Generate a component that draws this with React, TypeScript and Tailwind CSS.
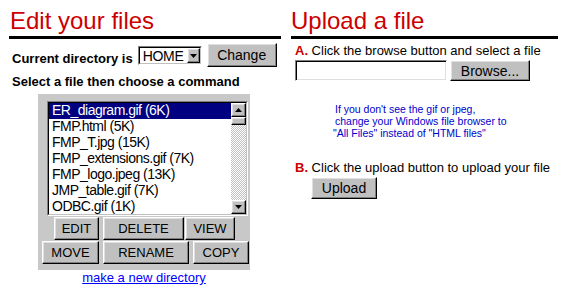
import React from "react";

const files = [
  "ER_diagram.gif (6K)",
  "FMP.html (5K)",
  "FMP_T.jpg (15K)",
  "FMP_extensions.gif (7K)",
  "FMP_logo.jpeg (13K)",
  "JMP_table.gif (7K)",
  "ODBC.gif (1K)",
];

const raised =
  "bg-[#c0c0c0] border border-t-white border-l-white border-r-black border-b-black shadow-[inset_-1px_-1px_#808080,inset_1px_1px_#dfdfdf]";

function Btn({ label, className }: { label: string; className: string }) {
  return (
    <button
      className={`${raised} ${className} flex items-center justify-center text-[13px] leading-none text-black`}
    >
      {label}
    </button>
  );
}

function Arrow({ up }: { up?: boolean }) {
  return (
    <svg width="7" height="4" viewBox="0 0 7 4">
      {up ? (
        <polygon points="3.5,0 7,4 0,4" fill="#000" />
      ) : (
        <polygon points="0,0 7,0 3.5,4" fill="#000" />
      )}
    </svg>
  );
}

function FileList() {
  return (
    <div className="ml-[9px] mt-[7px] w-[201px] h-[115px] border border-t-[#808080] border-l-[#808080] border-r-white border-b-white">
      <div className="h-full border border-t-black border-l-black border-r-[#c0c0c0] border-b-[#c0c0c0] bg-white flex overflow-hidden">
        <div className="flex-1 overflow-hidden">
          {files.map((f, i) => (
            <div
              key={f}
              className={`h-[16px] leading-[15px] pl-[3px] text-[14px] tracking-[-0.5px] whitespace-nowrap ${
                i === 0 ? "bg-[#000080] text-white" : "text-black"
              }`}
            >
              {f}
            </div>
          ))}
        </div>
        <div className="w-[15px] flex flex-col bg-[image:repeating-conic-gradient(#c0c0c0_0%_25%,#ffffff_0%_50%)] bg-[length:2px_2px]">
          <div className={`${raised} h-[14px] flex items-center justify-center`}>
            <Arrow up />
          </div>
          <div className={`${raised} h-[8px]`} />
          <div className="flex-1" />
          <div className={`${raised} h-[14px] flex items-center justify-center`}>
            <Arrow />
          </div>
        </div>
      </div>
    </div>
  );
}

export default function App() {
  return (
    <div className="w-[565px] h-[298px] bg-white flex font-['Liberation_Sans',Arial,sans-serif] text-black overflow-hidden">
      {/* left: edit */}
      <div className="ml-[9px] w-[272px] flex flex-col">
        <h1 className="mt-[7px] h-[28px] leading-[28px] pl-[1px] text-[24px] text-[#cc0000]">
          Edit your files
        </h1>
        <div className="mt-[1px] h-[3px] bg-black" />
        <div className="flex items-start h-[28px] pl-[3px]">
          <span className="mt-[12px] font-bold text-[13px] leading-[16px]">
            Current directory is
          </span>
          <div className="ml-[5px] mt-[7px] w-[64px] h-[19px] border border-t-[#808080] border-l-[#808080] border-r-white border-b-white">
            <div className="h-full flex items-center bg-white border border-t-black border-l-black border-r-[#c0c0c0] border-b-[#c0c0c0]">
              <span className="flex-1 pl-[3px] text-[14px] tracking-[-0.3px] leading-none">HOME</span>
              <div className={`${raised} w-[13px] h-full flex items-center justify-center`}>
                <Arrow />
              </div>
            </div>
          </div>
          <Btn label="Change" className="ml-[5px] mt-[4px] w-[70px] h-[24px] text-[14px]" />
        </div>
        <p className="mt-[7px] pl-[3px] font-bold text-[13px] leading-[16px]">
          Select a file then choose a command
        </p>
        <div className="mt-[4px] ml-[29px] w-[212px] h-[176px] bg-[#c8c8c8] flex flex-col">
          <FileList />
          <div className="mt-[1px] flex h-[23px] pl-[16px]">
            <Btn label="EDIT" className="w-[45px] h-full" />
            <Btn label="DELETE" className="ml-[4px] w-[81px] h-full" />
            <Btn label="VIEW" className="ml-[1px] w-[50px] h-full" />
          </div>
          <div className="mt-[1px] flex h-[23px] pl-[4px]">
            <Btn label="MOVE" className="w-[57px] h-full" />
            <Btn label="RENAME" className="ml-[4px] w-[86px] h-full" />
            <Btn label="COPY" className="ml-[4px] w-[56px] h-full" />
          </div>
        </div>
        <div className="ml-[29px] w-[212px] text-center leading-[16px] text-[13px]">
          <a href="#" className="text-[#0000ff] underline">
            make a new directory
          </a>
        </div>
      </div>

      {/* right: upload */}
      <div className="ml-[10px] w-[267px] flex flex-col">
        <h1 className="mt-[7px] h-[28px] leading-[28px] text-[24px] text-[#cc0000]">
          Upload a file
        </h1>
        <div className="mt-[1px] h-[3px] bg-black" />
        <p className="mt-[4px] pl-[4px] text-[13px] leading-[16px] whitespace-nowrap">
          <b className="text-[#cc0000]">A.</b> Click the browse button and select a file
        </p>
        <div className="mt-[1px] pl-[4px] flex">
          <div className="w-[152px] h-[21px] bg-white border border-t-[#808080] border-l-[#808080] border-r-white border-b-white shadow-[inset_1px_1px_#000,inset_-1px_-1px_#dfdfdf]" />
          <Btn label="Browse..." className="ml-[3px] w-[80px] h-[21px] text-[14px]" />
        </div>
        <div className="mt-[22px] pl-[44px] text-[10.5px] leading-[12px] text-[#0000cc] whitespace-nowrap">
          <div>If you don't see the gif or jpeg,</div>
          <div>change your Windows file browser to</div>
          <div className="-ml-[2px]">"All Files" instead of "HTML files"</div>
        </div>
        <p className="mt-[21px] pl-[4px] text-[13px] leading-[16px] whitespace-nowrap">
          <b className="text-[#cc0000]">B.</b> Click the upload button to upload your file
        </p>
        <Btn label="Upload" className="ml-[20px] mt-[1px] w-[66px] h-[22px] text-[14px]" />
      </div>
    </div>
  );
}
